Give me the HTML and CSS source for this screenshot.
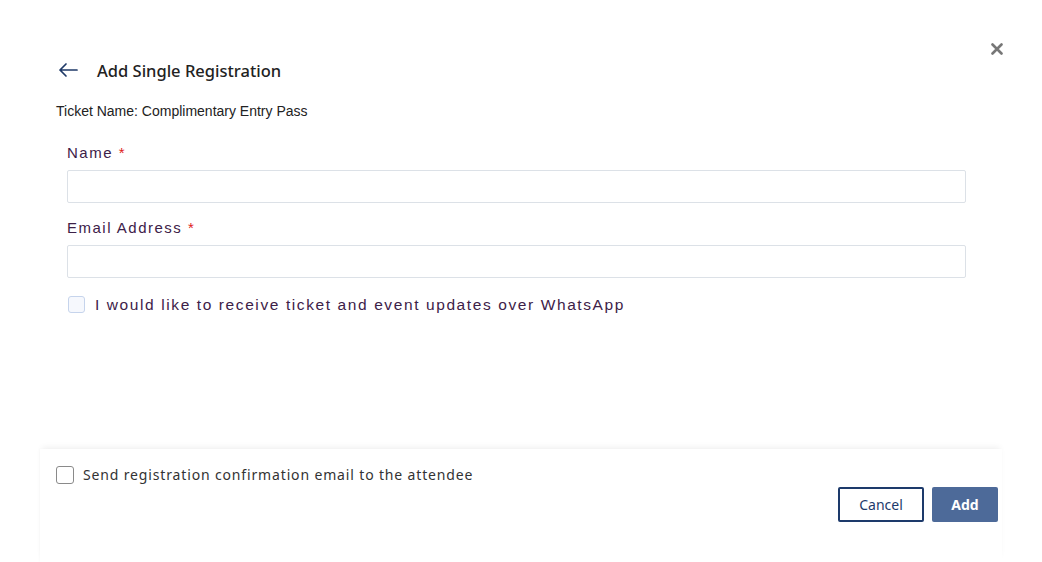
FILE: index.html
```html
<!DOCTYPE html>
<html lang="en">
<head>
    <meta charset="UTF-8">
    <meta name="viewport" content="width=device-width, initial-scale=1.0">
    <title>Add Single Registration</title>
    <link rel="stylesheet" href="styles.css">
</head>
<body>
    <div class="modal">
        <button class="close" aria-label="Close">
            <svg width="12" height="12" viewBox="0 0 12 12"><path d="M1.5 1.5 L10.5 10.5 M10.5 1.5 L1.5 10.5" stroke="#777" stroke-width="2.6" stroke-linecap="round"/></svg>
        </button>

        <div class="content">
            <div class="head">
                <svg class="back" width="22" height="16" viewBox="0 0 22 16"><path d="M20 8 H3 M9 2 L3 8 L9 14" fill="none" stroke="#1f3a68" stroke-width="1.7" stroke-linecap="round" stroke-linejoin="round"/></svg>
                <h2>Add Single Registration</h2>
            </div>
            <p class="ticket">Ticket Name: Complimentary Entry Pass</p>

            <div class="fields">
                <label class="label">Name <span class="req">*</span></label>
                <input type="text" class="field">

                <label class="label label-gap">Email Address <span class="req">*</span></label>
                <input type="text" class="field">

                <label class="check-row">
                    <span class="box box-blue"></span>
                    <span class="check-text">I would like to receive ticket and event updates over WhatsApp</span>
                </label>
            </div>
        </div>

        <div class="footer">
            <label class="confirm-row">
                <span class="box box-grey"></span>
                <span class="confirm-text">Send registration confirmation email to the attendee</span>
            </label>
            <div class="actions">
                <button class="btn btn-outline">Cancel</button>
                <button class="btn btn-primary">Add</button>
            </div>
        </div>
    </div>
</body>
</html>
```

FILE: styles.css
```css
body {
    margin: 0;
    background-color: #fff;
    font-family: 'Noto Sans', 'Liberation Sans', sans-serif;
    color: #222;
}
.modal {
    position: relative;
    height: 100vh;
    display: flex;
    flex-direction: column;
    padding: 0 40px;
}
.close {
    position: absolute;
    top: 43px;
    right: 39px;
    border: none;
    background: none;
    padding: 0;
    cursor: pointer;
    line-height: 0;
}
.content {
    flex: 1;
    padding: 58px 0 0 16px;
}
.head {
    display: flex;
    align-items: center;
    height: 24px;
}
.back {
    margin-left: 1px;
    margin-right: 18px;
}
.head h2 {
    margin: 0;
    font-size: 16.5px;
    font-weight: 500;
    color: #222;
}
.ticket {
    margin: 19px 0 0;
    font-family: 'Liberation Sans', sans-serif;
    font-size: 14px;
    line-height: 20px;
    color: #222;
}
.fields {
    display: flex;
    flex-direction: column;
    padding-left: 11px;
    width: 899px;
    margin-top: 22px;
}
.label {
    font-family: 'Liberation Sans', sans-serif;
    font-size: 15px;
    line-height: 20px;
    letter-spacing: 1.5px;
    color: #3d2148;
}
.label-gap {
    margin-top: 15px;
}
.req {
    color: #e0201b;
}
.field {
    margin-top: 7px;
    height: 33px;
    box-sizing: border-box;
    border: 1px solid #dce1e7;
    border-radius: 2px;
    padding: 0 10px;
    font-size: 14px;
}
.field:focus {
    outline: none;
    border-color: #9ab0d4;
}
.check-row {
    display: flex;
    align-items: center;
    margin-top: 18px;
    height: 17px;
}
.box {
    display: inline-block;
    box-sizing: border-box;
    flex-shrink: 0;
}
.box-blue {
    width: 17px;
    height: 17px;
    margin-left: 1px;
    border: 1px solid #c6d4ec;
    border-radius: 3px;
    background-color: #f6f8fd;
}
.check-text {
    margin-left: 10px;
    font-family: 'Liberation Sans', sans-serif;
    font-size: 15.5px;
    letter-spacing: 1.6px;
    color: #3d2148;
}
.footer {
    height: 113px;
    box-sizing: border-box;
    padding: 17px 4px 0 16px;
    box-shadow: 0 -4px 6px -2px rgba(0, 0, 0, 0.06), -1px 0 2px rgba(0, 0, 0, 0.02);
}
.confirm-row {
    display: flex;
    align-items: center;
    height: 17px;
}
.box-grey {
    width: 18px;
    height: 18px;
    border: 1px solid #8a8a8a;
    border-radius: 3px;
}
.confirm-text {
    margin-left: 9px;
    font-size: 14px;
    letter-spacing: 0.85px;
    color: #333;
}
.actions {
    display: flex;
    justify-content: flex-end;
    gap: 8px;
    margin-top: 4px;
}
.btn {
    height: 35px;
    box-sizing: border-box;
    border-radius: 2px;
    font-family: 'Noto Sans', sans-serif;
    font-size: 14px;
    cursor: pointer;
}
.btn-outline {
    width: 86px;
    border: 2px solid #1d3a6b;
    background-color: #fff;
    color: #1d3a6b;
}
.btn-primary {
    width: 66px;
    border: none;
    background-color: #4d6a99;
    color: #fff;
    font-weight: 700;
}
```
